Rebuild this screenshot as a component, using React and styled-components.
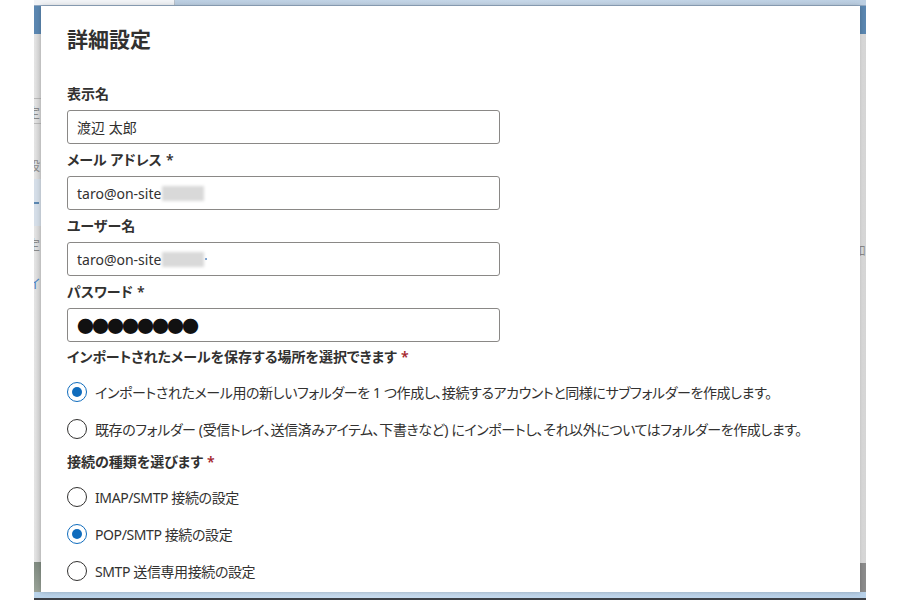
import React from "react";
import styled, { createGlobalStyle } from "styled-components";

const Global = createGlobalStyle`
  html, body { margin: 0; padding: 0; background: #ffffff; }
  body {
    font-family: "Noto Sans", "Noto Sans CJK JP", sans-serif;
    color: #323130;
  }
  * { box-sizing: border-box; }
`;

const Page = styled.div`
  width: 900px;
  height: 600px;
  padding: 0 34px;
  background: #ffffff;
  overflow: hidden;
`;

const Frame = styled.div`
  width: 832px;
  height: 600px;
  display: flex;
  flex-direction: column;
`;

const TopBar = styled.div`
  height: 6px;
  display: flex;
  border-bottom: 1px solid #93a9c2;
`;

const TopSeg = styled.div`
  width: ${(p) => p.$w || "auto"};
  flex: ${(p) => (p.$w ? "none" : "1")};
  background: ${(p) => p.$bg};
  border-right: ${(p) => (p.$divider ? "1px solid #b9c1ca" : "none")};
`;

const Middle = styled.div`
  flex: 1;
  display: flex;
  min-height: 0;
`;

const Gutter = styled.div`
  width: ${(p) => p.$w}px;
  display: flex;
  flex-direction: column;
  overflow: hidden;
  background: linear-gradient(to right, #e4e4e4, #d4d4d4);
`;

const GutterBand = styled.div`
  height: ${(p) => p.$h}px;
  flex: ${(p) => (p.$grow ? "1" : "none")};
  background: ${(p) => p.$bg || "transparent"};
  border-bottom: ${(p) => (p.$line ? "1px solid #b8b8b8" : "none")};
  display: flex;
  align-items: center;
  overflow: hidden;
  white-space: nowrap;
`;

const GutterText = styled.span`
  font-family: "Noto Sans CJK JP", sans-serif;
  font-size: 13px;
  color: ${(p) => p.$color || "#8a8a8a"};
  margin-left: ${(p) => p.$ml}px;
`;

const Dash = styled.span`
  width: 5px;
  height: 2px;
  background: #5b87b1;
`;

const Dialog = styled.div`
  width: 819px;
  position: relative;
  z-index: 1;
  background: #ffffff;
  box-shadow: 0 0 5px rgba(0, 0, 0, 0.22);
  padding: 18px 26px 0 26px;
  display: flex;
  flex-direction: column;
  font-feature-settings: "palt";
`;

const Title = styled.h1`
  margin: 0 0 32px 0;
  font-family: "Noto Sans CJK JP", sans-serif;
  font-size: 21px;
  line-height: 28px;
  font-weight: 600;
  color: #323130;
`;

const Fields = styled.div`
  display: flex;
  flex-direction: column;
  gap: 6px;
`;

const Field = styled.div`
  display: flex;
  flex-direction: column;
  gap: 6px;
`;

const Label = styled.div`
  font-size: 14px;
  line-height: 20px;
  font-weight: 600;
  color: #323130;
  margin-top: ${(p) => p.$mt || 0}px;
`;

const Required = styled.span`
  color: ${(p) => (p.$red ? "#a4262c" : "#323130")};
  margin-left: 4px;
`;

const InputBox = styled.div`
  width: 433px;
  height: 34px;
  border: 1px solid #8a8886;
  border-radius: 3px;
  padding: 0 9px;
  display: flex;
  align-items: center;
  font-size: 14px;
  color: #323130;
  white-space: nowrap;
`;

const Blur = styled.span`
  display: inline-block;
  width: 42px;
  height: 15px;
  margin-left: 1px;
  background: #d9d9d9;
  filter: blur(1.5px);
`;

const BlueDot = styled.span`
  display: inline-block;
  width: 2px;
  height: 2px;
  border-radius: 50%;
  background: #4a7fc0;
  margin-left: 1px;
`;

const Dots = styled.span`
  font-family: "Noto Sans CJK JP", sans-serif;
  font-size: 17px;
  letter-spacing: -2px;
  color: #111111;
  font-feature-settings: normal;
`;

const RadioGroup = styled.div`
  display: flex;
  flex-direction: column;
  gap: ${(p) => p.$gap}px;
  margin-top: 15px;
`;

const RadioRow = styled.label`
  display: flex;
  align-items: center;
  gap: 8px;
  height: 20px;
  font-size: 14px;
  letter-spacing: -0.4px;
  color: #323130;
  white-space: nowrap;
`;

const Circle = styled.span`
  width: 20px;
  height: 20px;
  flex: none;
  border-radius: 50%;
  border: 1px solid ${(p) => (p.$checked ? "#0f6cbd" : "#323130")};
  display: flex;
  align-items: center;
  justify-content: center;
  &::after {
    content: "";
    width: 10px;
    height: 10px;
    border-radius: 50%;
    background: ${(p) => (p.$checked ? "#0f6cbd" : "transparent")};
  }
`;

const BottomBar = styled.div`
  height: 8px;
  background: linear-gradient(to right, #b9d3ea, #c8dcef 40%, #b7d0e8);
  border-bottom: 2px solid #3c4046;
`;

function Radio({ checked, children }) {
  return (
    <RadioRow>
      <Circle $checked={checked} />
      <span>{children}</span>
    </RadioRow>
  );
}

export default function App() {
  return (
    <>
      <Global />
      <Page>
        <Frame>
          <TopBar>
            <TopSeg $w="141px" $bg="#f1f3f6" $divider />
            <TopSeg $bg="linear-gradient(to right, #bccfe2, #c6d7e8 50%, #bccfe2)" />
          </TopBar>
          <Middle>
            <Gutter $w={7}>
              <GutterBand $h={28} $bg="#5b87b1" />
              <GutterBand $h={65} $line />
              <GutterBand $h={25} $line>
                <GutterText $ml={-7}>定</GutterText>
              </GutterBand>
              <GutterBand $h={25} />
              <GutterBand $h={30}>
                <GutterText $ml={-7}>般</GutterText>
              </GutterBand>
              <GutterBand $h={47} $bg="#d5dee8">
                <Dash />
              </GutterBand>
              <GutterBand $h={35}>
                <GutterText $ml={-7}>定</GutterText>
              </GutterBand>
              <GutterBand $h={43}>
                <GutterText $ml={-6} $color="#4f86c6">イ</GutterText>
              </GutterBand>
              <GutterBand $grow />
              <GutterBand $h={30} $bg="linear-gradient(#7f8a80, #9aa398)" />
            </Gutter>

            <Dialog>
              <Title>詳細設定</Title>
              <Fields>
                <Field>
                  <Label>表示名</Label>
                  <InputBox>渡辺 太郎</InputBox>
                </Field>
                <Field>
                  <Label>
                    メール アドレス<Required>*</Required>
                  </Label>
                  <InputBox>
                    taro@on-site
                    <Blur />
                  </InputBox>
                </Field>
                <Field>
                  <Label>ユーザー名</Label>
                  <InputBox>
                    taro@on-site
                    <Blur />
                    <BlueDot />
                  </InputBox>
                </Field>
                <Field>
                  <Label>
                    パスワード<Required>*</Required>
                  </Label>
                  <InputBox>
                    <Dots>●●●●●●●●</Dots>
                  </InputBox>
                </Field>
              </Fields>

              <Label $mt={5}>
                インポートされたメールを保存する場所を選択できます<Required $red>*</Required>
              </Label>
              <RadioGroup $gap={17}>
                <Radio checked>
                  インポートされたメール用の新しいフォルダーを 1 つ作成し、接続するアカウントと同様にサブフォルダーを作成します。
                </Radio>
                <Radio>
                  既存のフォルダー (受信トレイ、送信済みアイテム、下書きなど) にインポートし、それ以外についてはフォルダーを作成します。
                </Radio>
              </RadioGroup>

              <Label $mt={13}>
                接続の種類を選びます<Required $red>*</Required>
              </Label>
              <RadioGroup $gap={17}>
                <Radio>IMAP/SMTP 接続の設定</Radio>
                <Radio checked>POP/SMTP 接続の設定</Radio>
                <Radio>SMTP 送信専用接続の設定</Radio>
              </RadioGroup>
            </Dialog>

            <Gutter $w={6}>
              <GutterBand $h={28} $bg="#5b87b1" />
              <GutterBand $h={200} />
              <GutterBand $h={30}>
                <GutterText $ml={-1}>ﾛ</GutterText>
              </GutterBand>
              <GutterBand $grow />
              <GutterBand $h={29} $bg="#8c8c8c" />
            </Gutter>
          </Middle>
          <BottomBar />
        </Frame>
      </Page>
    </>
  );
}
